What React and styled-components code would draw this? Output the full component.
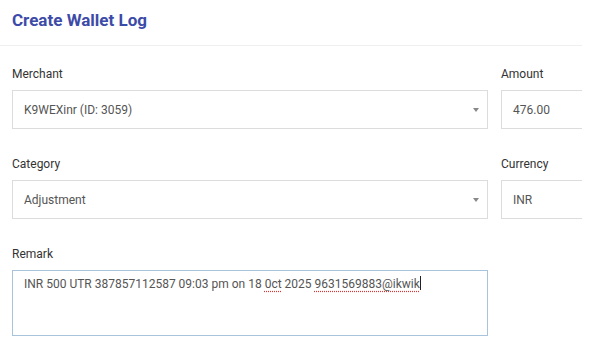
import styled, { createGlobalStyle } from 'styled-components';

const GlobalStyle = createGlobalStyle`
  html, body {
    margin: 0;
    padding: 0;
    background: #fff;
    font-family: Roboto, "Liberation Sans", sans-serif;
  }
`;

const Panel = styled.div`
  width: 582px;
  overflow: hidden;
  background: #fff;
`;

const Header = styled.div`
  height: 46px;
  padding: 0 12px;
  display: flex;
  align-items: center;
  border-bottom: 1px solid #f0f0f0;
  box-sizing: border-box;
`;

const Title = styled.h2`
  margin: 0;
  margin-top: -5px;
  font-size: 17px;
  font-weight: 700;
  color: #3d4ba8;
`;

const Body = styled.div`
  padding: 18px 0 0 12px;
  display: flex;
  flex-direction: column;
  gap: 25px;
`;

const Row = styled.div`
  display: grid;
  grid-template-columns: 476px 100px;
  column-gap: 13px;
`;

const Field = styled.div`
  display: flex;
  flex-direction: column;
`;

const Label = styled.label`
  font-size: 12px;
  color: #333;
  height: 17px;
  line-height: 17px;
  padding-top: 2px;
  margin-bottom: 7px;
`;

const Box = styled.div`
  height: 39px;
  box-sizing: border-box;
  border: 1px solid #dcdcdc;
  display: flex;
  align-items: center;
  justify-content: space-between;
  padding: 0 8px 0 11px;
  font-size: 12px;
  color: #555;
  background: #fff;
`;

const Caret = styled.span`
  width: 0;
  height: 0;
  border-left: 3px solid transparent;
  border-right: 3px solid transparent;
  border-top: 4px solid #888;
`;

const TextArea = styled.div`
  width: 476px;
  height: 66px;
  box-sizing: border-box;
  border: 1px solid #a9c3dc;
  padding: 5px 11px;
  font-size: 12px;
  color: #555;
`;

const Misspelled = styled.span`
  text-decoration: underline dotted #d33;
  text-underline-offset: 3px;
`;

const Cursor = styled.span`
  display: inline-block;
  width: 1px;
  height: 14px;
  background: #222;
  vertical-align: -2px;
`;

function SelectField({ label, value }) {
  return (
    <Field>
      <Label>{label}</Label>
      <Box>
        <span>{value}</span>
        <Caret />
      </Box>
    </Field>
  );
}

function InputField({ label, value }) {
  return (
    <Field>
      <Label>{label}</Label>
      <Box>{value}</Box>
    </Field>
  );
}

export default function App() {
  return (
    <>
      <GlobalStyle />
      <Panel>
        <Header>
          <Title>Create Wallet Log</Title>
        </Header>
        <Body>
          <Row>
            <SelectField label="Merchant" value="K9WEXinr (ID: 3059)" />
            <InputField label="Amount" value="476.00" />
          </Row>
          <Row>
            <SelectField label="Category" value="Adjustment" />
            <InputField label="Currency" value="INR" />
          </Row>
          <Field>
            <Label>Remark</Label>
            <TextArea>
              INR 500 UTR 387857112587 09:03 pm on 18 <Misspelled>0ct</Misspelled> 2025{' '}
              <Misspelled>9631569883@ikwik</Misspelled>
              <Cursor />
            </TextArea>
          </Field>
        </Body>
      </Panel>
    </>
  );
}
